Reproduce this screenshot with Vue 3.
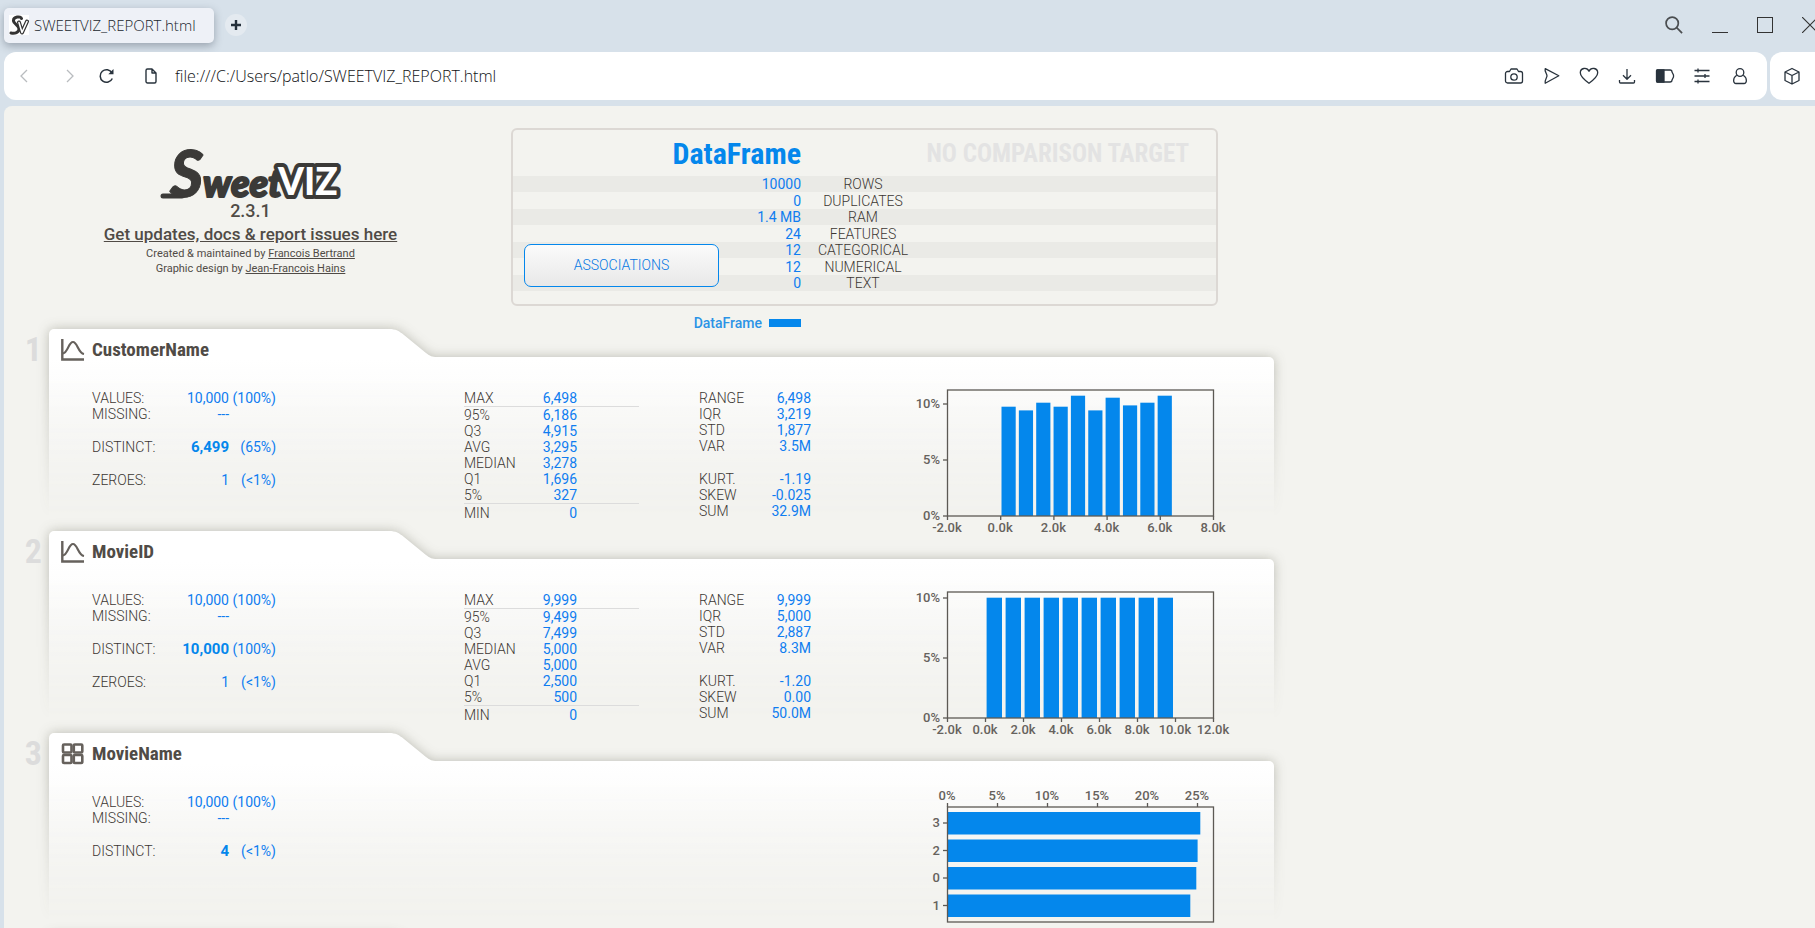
<script setup>
import { ref } from 'vue'

const address = ref('file:///C:/Users/patlo/SWEETVIZ_REPORT.html')

const summary = [
  ['10000', 'ROWS'],
  ['0', 'DUPLICATES'],
  ['1.4 MB', 'RAM'],
  ['24', 'FEATURES'],
  ['12', 'CATEGORICAL'],
  ['12', 'NUMERICAL'],
  ['0', 'TEXT'],
]

const FRAME_X = 47
const FRAME_W = 266

function histogram({ ticks, first, pitch, width, bars, step }) {
  const top = 61
  const height = 126
  const bottom = top + height
  const gap = FRAME_W / (ticks.length - 1)
  return {
    top,
    height,
    bars: bars.map((h, i) => ({ x: first + i * pitch, y: bottom - h, w: width, h })),
    xTicks: ticks.map((label, i) => ({ label, x: FRAME_X + i * gap, y1: bottom, y2: bottom + 4, ty: bottom + 16 })),
    yTicks: ['0%', '5%', '10%'].map((label, i) => ({ label, y: bottom - i * step })),
  }
}

function ranking({ ticks, rows }) {
  const top = 74
  return {
    top,
    height: 115,
    bars: rows.map((r, i) => ({ x: FRAME_X, y: top + 5 + i * 27.5, w: r.size, h: 22.5 })),
    xTicks: ticks.map((label, i) => ({ label, x: FRAME_X + i * 50, y1: top - 4, y2: top, ty: top - 7 })),
    yTicks: rows.map((r, i) => ({ label: r.label, y: top + 16 + i * 27.5 })),
  }
}

const features = [
  {
    name: 'CustomerName',
    kind: 'numeric',
    counts: [
      [['VALUES:', '10,000', '(100%)'], ['MISSING:', '---', '']],
      [['DISTINCT:', '6,499', '(65%)']],
      [['ZEROES:', '1', '(<1%)']],
    ],
    spread: [
      [['MAX', '6,498']],
      [['95%', '6,186'], ['Q3', '4,915'], ['AVG', '3,295'], ['MEDIAN', '3,278'], ['Q1', '1,696'], ['5%', '327']],
      [['MIN', '0']],
    ],
    moments: [
      [['RANGE', '6,498'], ['IQR', '3,219'], ['STD', '1,877'], ['VAR', '3.5M']],
      [['KURT.', '-1.19'], ['SKEW', '-0.025'], ['SUM', '32.9M']],
    ],
    chart: histogram({
      ticks: ['-2.0k', '0.0k', '2.0k', '4.0k', '6.0k', '8.0k'],
      first: 101.5, pitch: 17.35, width: 14.2, step: 56,
      bars: [109.3, 105.6, 113.3, 109.3, 120.3, 105.6, 118.3, 110.6, 113.3, 120.3],
    }),
  },
  {
    name: 'MovieID',
    kind: 'numeric',
    counts: [
      [['VALUES:', '10,000', '(100%)'], ['MISSING:', '---', '']],
      [['DISTINCT:', '10,000', '(100%)']],
      [['ZEROES:', '1', '(<1%)']],
    ],
    spread: [
      [['MAX', '9,999']],
      [['95%', '9,499'], ['Q3', '7,499'], ['MEDIAN', '5,000'], ['AVG', '5,000'], ['Q1', '2,500'], ['5%', '500']],
      [['MIN', '0']],
    ],
    moments: [
      [['RANGE', '9,999'], ['IQR', '5,000'], ['STD', '2,887'], ['VAR', '8.3M']],
      [['KURT.', '-1.20'], ['SKEW', '0.00'], ['SUM', '50.0M']],
    ],
    chart: histogram({
      ticks: ['-2.0k', '0.0k', '2.0k', '4.0k', '6.0k', '8.0k', '10.0k', '12.0k'],
      first: 86.6, pitch: 19, width: 15.4, step: 60,
      bars: Array(10).fill(120.3),
    }),
  },
  {
    name: 'MovieName',
    kind: 'category',
    counts: [
      [['VALUES:', '10,000', '(100%)'], ['MISSING:', '---', '']],
      [['DISTINCT:', '4', '(<1%)']],
    ],
    chart: ranking({
      ticks: ['0%', '5%', '10%', '15%', '20%', '25%'],
      rows: [
        { label: '3', size: 253.3 },
        { label: '2', size: 250.6 },
        { label: '0', size: 249.3 },
        { label: '1', size: 243.3 },
      ],
    }),
  },
  { name: '', kind: 'empty', counts: [] },
]
</script>

<template>
  <div class="window">
    <header class="tabbar">
      <div class="tab">
        <svg class="favicon" width="20" height="20" viewBox="0 0 20 20" aria-hidden="true">
          <rect width="20" height="20" fill="#fff" />
          <g fill="none" stroke-linecap="round" stroke-linejoin="round">
            <path d="M12.500 3.500C12 .8 4 1.500 4.500 6c.3 3 5.500 4 5.500 8 0 3.500-4 4.800-8 4" stroke="#333" stroke-width="3" />
            <path d="M10 7.500l3 10 5-11" stroke="#333" stroke-width="4" />
            <path d="M10 7.500l3 10 5-11" stroke="#fff" stroke-width="1.600" />
          </g>
        </svg>
        <span>SWEETVIZ_REPORT.html</span>
      </div>
      <button class="newtab" aria-label="New tab">
        <svg width="10" height="10" viewBox="0 0 10 10"><path d="M5 0v10M0 5h10" stroke="#25303b" stroke-width="2.400" /></svg>
      </button>
      <div class="wincontrols">
        <button aria-label="Search tabs">
          <svg width="18" height="18" viewBox="0 0 20 20" fill="none" stroke="#4a4d50" stroke-width="1.900"><circle cx="8" cy="8" r="6.800" /><path d="M13 13L19 19" /></svg>
        </button>
        <button aria-label="Minimize">
          <svg width="16" height="16" viewBox="0 0 16 16"><path d="M0 15.500h16" stroke="#333" /></svg>
        </button>
        <button aria-label="Maximize">
          <svg width="16" height="16" viewBox="0 0 16 16"><rect x=".5" y=".5" width="15" height="15" fill="none" stroke="#333" /></svg>
        </button>
        <button aria-label="Close">
          <svg width="16" height="16" viewBox="0 0 16 16"><path d="M0 0l16 16M16 0L0 16" stroke="#333" stroke-width="1.200" /></svg>
        </button>
      </div>
    </header>

    <nav class="toolbar">
      <div class="addressbar">
        <button class="back" aria-label="Back">
          <svg width="8" height="14" viewBox="0 0 8 14" fill="none" stroke="#b9bcbf" stroke-width="1.300"><path d="M7 1L1 7l6 6" /></svg>
        </button>
        <button class="forward" aria-label="Forward">
          <svg width="8" height="14" viewBox="0 0 8 14" fill="none" stroke="#b9bcbf" stroke-width="1.300"><path d="M1 1l6 6-6 6" /></svg>
        </button>
        <button class="reload" aria-label="Reload">
          <svg width="16" height="16" viewBox="0 0 16 16" fill="none" stroke="#29333d" stroke-width="1.500"><path d="M13.300 10.500a6.300 6.300 0 1 1-.3-5.600" /><path d="M14.500 1v5.200H9.300z" fill="#29333d" stroke="none" /></svg>
        </button>
        <svg class="doc" width="12" height="16" viewBox="0 0 12 16" fill="none" stroke="#29333d" stroke-width="1.400" stroke-linejoin="round" aria-hidden="true"><path d="M2.500 1H7l4 4v8.500a1.500 1.500 0 0 1-1.500 1.500h-7A1.500 1.500 0 0 1 1 13.500v-11A1.500 1.500 0 0 1 2.500 1zM7 1v4h4" /></svg>
        <input v-model="address" class="address" aria-label="Address" type="text" />
        <div class="actions">
          <button aria-label="Snapshot">
            <svg width="20" height="20" viewBox="0 0 20 20"><path d="M3.500 5.500h2L7 3h6l1.500 2.500h2a2 2 0 0 1 2 2V15a2 2 0 0 1-2 2h-13a2 2 0 0 1-2-2V7.500a2 2 0 0 1 2-2z" /><circle cx="10" cy="11" r="3.200" /></svg>
          </button>
          <button aria-label="Flow">
            <svg width="20" height="20" viewBox="0 0 20 20"><path d="M3.200 2.600l13.600 7.200L3.200 17.200C2.300 14.500 4.800 12 5 10S2.300 5.500 3.200 2.600z" /></svg>
          </button>
          <button aria-label="Bookmark">
            <svg width="20" height="20" viewBox="0 0 20 20"><path d="M10 17.300C5.500 14 1.300 10.600 1.300 6.800c0-5 6.700-6 8.700-1.500 2-4.500 8.700-3.500 8.700 1.500 0 3.800-4.200 7.200-8.700 10.500z" /></svg>
          </button>
          <button aria-label="Downloads">
            <svg width="20" height="20" viewBox="0 0 20 20"><path d="M10 3v10M6 9.300l4 4 4-4M2.500 14v2a1 1 0 0 0 1 1h13a1 1 0 0 0 1-1v-2" /></svg>
          </button>
          <button aria-label="Battery saver">
            <svg width="20" height="20" viewBox="0 0 20 20"><path d="M2.500 4h12.500a2 2 0 0 1 2 2l1.500 3v2L17 14a2 2 0 0 1-2 2H2.500a1 1 0 0 1-1-1V5a1 1 0 0 1 1-1z" /><path d="M2 4h7v12H2z" fill="#29333d" /></svg>
          </button>
          <button aria-label="Easy setup">
            <svg width="20" height="20" viewBox="0 0 20 20"><path d="M2.500 4.500h15M2.500 10h15M2.500 15.500h15M6 2.500v4M13 8v4M6 13.500v4" /></svg>
          </button>
          <button aria-label="Profile">
            <svg width="20" height="20" viewBox="0 0 20 20"><circle cx="10" cy="6.500" r="3.800" /><path d="M6.700 9.300C2.500 12 3 17.500 6 17.500h8c3 0 3.500-5.500-.7-8.200" /></svg>
          </button>
        </div>
      </div>
      <div class="sidebox">
        <button aria-label="Extensions">
          <svg width="20" height="20" viewBox="0 0 20 20"><path d="M10 2.500l7 3.500v8.500L10 18l-7-3.500V6zM3 6l7 3.500L17 6M10 9.500V18" /></svg>
        </button>
      </div>
    </nav>

    <main class="page">
      <div class="report">
        <section class="top">
          <div class="brand">
            <svg class="logo" width="182" height="50" viewBox="0 0 182 50" role="img" aria-label="Sweetviz">
              <g class="script">
                <path d="M3 46H22" fill="none" stroke-width="5" stroke-linecap="round" />
                <text x="10" y="47" font-size="64" stroke-width="1">S</text>
                <text x="43" y="47" font-size="38" stroke-width="2">weet</text>
              </g>
              <text class="block" x="118" y="45" font-size="37">VIZ</text>
            </svg>
            <p class="version">2.3.1</p>
            <a class="updates" href="#">Get updates, docs &amp; report issues here</a>
            <p class="credit">Created &amp; maintained by <a href="#">Francois Bertrand</a></p>
            <p class="credit">Graphic design by <a href="#">Jean-Francois Hains</a></p>
          </div>

          <div class="overview">
            <div class="panel">
              <div class="titles">
                <h1>DataFrame</h1>
                <h2>NO COMPARISON TARGET</h2>
              </div>
              <table class="summary">
                <tbody>
                  <tr v-for="[value, label] in summary" :key="label">
                    <td>{{ value }}</td>
                    <th scope="row">{{ label }}</th>
                    <td></td>
                  </tr>
                </tbody>
              </table>
              <button class="associations">ASSOCIATIONS</button>
            </div>
            <div class="legend"><span>DataFrame</span><i></i></div>
          </div>
        </section>

        <article v-for="(f, n) in features" :key="n" class="feature">
          <div class="backdrop">
            <svg width="100%" height="100%" aria-hidden="true">
              <defs>
                <linearGradient :id="'fade' + n" gradientUnits="userSpaceOnUse" x1="0" y1="0" x2="0" y2="202">
                  <stop offset=".15" stop-color="#fff" />
                  <stop offset="1" stop-color="#f1f1ef" />
                </linearGradient>
              </defs>
              <rect y="28" width="100%" height="174" rx="5" :fill="`url(#fade${n})`" />
              <path d="M0 60V5a5 5 0 0 1 5-5H340c7 0 10 2 15 6l22 18c4 3 6 4 11 4V60z" :fill="`url(#fade${n})`" />
            </svg>
          </div>
          <template v-if="f.name">
            <span class="index">{{ n + 1 }}</span>
            <h3>
              <svg v-if="f.kind === 'numeric'" width="24" height="24" viewBox="0 0 24 24" fill="none" stroke="#66615c" aria-hidden="true">
                <path d="M1.300 1v20.500H23" stroke-width="2.400" />
                <path d="M2 15.500C7 14.500 7.500 4 12 4s5 11 11 12" stroke-width="2.200" />
              </svg>
              <svg v-else width="24" height="24" viewBox="0 0 24 24" fill="none" stroke="#66615c" stroke-width="2.600" aria-hidden="true">
                <rect x="2" y="2.500" width="8.500" height="8" rx="1" /><rect x="12.800" y="2.500" width="8.500" height="8" rx="1" />
                <rect x="2" y="13" width="8.500" height="8" rx="1" /><rect x="12.800" y="13" width="8.500" height="8" rx="1" />
              </svg>
              {{ f.name }}
            </h3>
            <div class="stats">
              <table class="counts">
                <tbody v-for="(group, g) in f.counts" :key="g">
                  <tr v-for="[label, value, share] in group" :key="label" :class="{ distinct: label === 'DISTINCT:' }">
                    <th scope="row">{{ label }}</th>
                    <td>{{ value }}</td>
                    <td class="share">{{ share }}</td>
                  </tr>
                </tbody>
              </table>
              <table v-if="f.spread" class="spread">
                <tbody v-for="(group, g) in f.spread" :key="g">
                  <tr v-for="[label, value] in group" :key="label">
                    <th scope="row">{{ label }}</th>
                    <td>{{ value }}</td>
                    <td></td>
                  </tr>
                </tbody>
              </table>
              <table v-if="f.moments" class="moments">
                <tbody v-for="(group, g) in f.moments" :key="g">
                  <tr v-for="[label, value] in group" :key="label">
                    <th scope="row">{{ label }}</th>
                    <td>{{ value }}</td>
                  </tr>
                </tbody>
              </table>
            </div>
            <svg class="chart" width="340" height="202" role="img" :aria-label="f.name + ' distribution'">
              <rect v-for="(b, i) in f.chart.bars" :key="'b' + i" :x="b.x" :y="b.y" :width="b.w" :height="b.h" fill="#0487ec" />
              <g fill="none" stroke="#5c5954" stroke-width="1.300">
                <rect :x="FRAME_X + 0.500" :y="f.chart.top" :width="FRAME_W" :height="f.chart.height" />
                <path v-for="t in f.chart.xTicks" :key="t.label" :d="`M${t.x + 0.500} ${t.y1}V${t.y2}`" />
                <path v-for="t in f.chart.yTicks" :key="t.label" :d="`M${FRAME_X - 4} ${t.y}h4`" />
              </g>
              <g text-anchor="middle"><text v-for="t in f.chart.xTicks" :key="t.label" :x="t.x" :y="t.ty">{{ t.label }}</text></g>
              <g text-anchor="end"><text v-for="t in f.chart.yTicks" :key="t.label" :x="FRAME_X - 7" :y="t.y + 4">{{ t.label }}</text></g>
            </svg>
          </template>
        </article>
      </div>
    </main>
  </div>
</template>

<style>
html,
body {
  overflow: hidden;
  background: #d7e1ea;
}
</style>

<style scoped>
* {
  box-sizing: border-box;
}
.window {
  display: flex;
  flex-direction: column;
  height: 100vh;
  overflow: hidden;
  background: #d7e1ea;
  font-family: Roboto, "Liberation Sans", sans-serif;
}
button {
  display: flex;
  align-items: center;
  justify-content: center;
  padding: 0;
  border: 0;
  background: none;
  font-family: inherit;
}
p,
h1,
h2,
h3 {
  margin: 0;
}
table {
  border-spacing: 0;
  table-layout: fixed;
}
th,
td {
  padding: 0;
}

.tabbar {
  display: flex;
  align-items: center;
  flex: none;
  height: 52px;
  padding: 0 0 2px 4px;
}
.tab {
  display: flex;
  align-items: center;
  gap: 5px;
  width: 210px;
  height: 35px;
  padding-left: 5px;
  border-radius: 5px;
  background: #eef1f7;
  box-shadow: 0 3px 8px rgba(60, 70, 85, 0.4);
  color: #20272e;
  font: 300 15px/20px "Open Sans", "Noto Sans", sans-serif;
}
.newtab {
  width: 22px;
  height: 22px;
  margin-left: 11px;
  border-radius: 11px;
  background: #e4eaf0;
}
.wincontrols {
  display: flex;
  gap: 29px;
  margin-left: auto;
  margin-right: -3px;
}

.toolbar {
  display: flex;
  flex: none;
  gap: 3px;
  height: 48px;
  padding-left: 4px;
}
.addressbar {
  display: flex;
  flex: 1;
  align-items: center;
  padding: 0 17px 0 16px;
  border-radius: 12px;
  background: #fff;
}
.sidebox {
  display: flex;
  align-items: center;
  width: 45px;
  padding-left: 12px;
  border-radius: 12px 0 0 12px;
  background: #fff;
}
.forward {
  margin-left: 38px;
}
.reload {
  margin-left: 25px;
}
.doc {
  margin: 0 18px 0 30px;
}
.address {
  flex: 1;
  min-width: 0;
  padding: 0;
  border: 0;
  outline: 0;
  background: none;
  color: #101214;
  font: 300 16px/24px "Open Sans", "Noto Sans", sans-serif;
}
.actions {
  display: flex;
  justify-content: space-between;
  width: 246px;
}
.actions svg,
.sidebox svg {
  fill: none;
  stroke: #29333d;
  stroke-width: 1.300;
  stroke-linejoin: round;
}

.page {
  flex: 1;
  min-height: 0;
  margin: 6px 0 0 4px;
  overflow: hidden;
  border-radius: 8px 0 0 0;
  background: #f3f3ef;
  color: #504b46;
}
.report {
  max-width: 1270px;
}
.top {
  display: grid;
  grid-template-columns: 493px minmax(0, 707px);
  column-gap: 14px;
  padding-top: 22px;
}
.brand {
  display: flex;
  flex-direction: column;
  align-items: center;
  padding-top: 22px;
  font-weight: 500;
}
.logo {
  overflow: visible;
}
.script {
  fill: #3b3a38;
  stroke: #3b3a38;
  stroke-linejoin: round;
  font-family: Lato, sans-serif;
  font-style: italic;
  font-weight: 900;
}
.block {
  fill: #fff;
  stroke: #3b3a38;
  stroke-width: 8px;
  stroke-linejoin: round;
  paint-order: stroke;
  font-family: Lato, sans-serif;
  font-weight: 900;
}
.version {
  font-size: 18px;
  line-height: 22px;
}
.updates {
  color: inherit;
  font-size: 17px;
  line-height: 24px;
}
.credit {
  font-size: 11px;
  font-weight: 400;
  line-height: 15px;
}
.credit a {
  color: inherit;
}

.panel {
  position: relative;
  height: 178px;
  border: 2px solid #dcd8d4;
  border-radius: 6px;
}
.titles {
  display: grid;
  grid-template-columns: 288px 1fr;
  align-items: center;
  height: 46px;
  font-family: "Roboto Condensed", Roboto, sans-serif;
}
.titles h1 {
  color: #0487ec;
  font-size: 30px;
  line-height: 48px;
  text-align: right;
}
.titles h2 {
  padding-right: 27px;
  color: #e3e3e3;
  font-size: 25px;
  line-height: 48px;
  text-align: right;
  white-space: nowrap;
}
.titles > * {
  height: 46px;
}
.summary {
  width: 100%;
  font-size: 14px;
}
.summary td,
.summary th {
  height: 16px;
  line-height: 16px;
}
.summary tr:nth-child(even) > * {
  height: 17px;
}
.summary tr:nth-child(odd) {
  background: #eaeae6;
}
.summary td:first-child {
  width: 288px;
  color: #0f7df0;
  text-align: right;
}
.summary th {
  width: 124px;
  color: #3c3733;
  font-weight: 300;
}
.associations {
  position: absolute;
  left: 11px;
  bottom: 17px;
  width: 195px;
  height: 43px;
  padding-bottom: 2px;
  border: 1px solid #0487ec;
  border-radius: 7px;
  background: linear-gradient(#fbfbfb, #e8e8e8);
  color: #0478e4;
  font-size: 14px;
  font-weight: 300;
}
.legend {
  display: flex;
  align-items: center;
  justify-content: flex-end;
  gap: 7px;
  width: 290px;
  height: 23px;
  padding-top: 10px;
  color: #2b93e6;
  font-size: 14px;
  font-weight: 500;
}
.legend i {
  width: 32px;
  height: 8px;
  background: #0487ec;
}

.feature {
  position: relative;
  min-height: 202px;
  margin-left: 45px;
}
.backdrop {
  position: absolute;
  inset: -24px -24px 0;
  padding: 24px 24px 0;
  overflow: hidden;
  -webkit-mask-image: linear-gradient(#000 30%, transparent 94%);
  mask-image: linear-gradient(#000 30%, transparent 94%);
}
.backdrop svg {
  display: block;
  overflow: visible;
  filter: drop-shadow(0 0 6px rgba(60, 60, 40, 0.3));
}
.index {
  position: absolute;
  right: calc(100% + 7px);
  top: 0;
  color: #dcdcdc;
  font: 700 34px/40px "Roboto Condensed", Roboto, sans-serif;
}
h3 {
  position: relative;
  display: flex;
  align-items: center;
  gap: 7px;
  height: 42px;
  padding-left: 12px;
  font: 700 19px/42px "Roboto Condensed", Roboto, sans-serif;
}
.stats {
  position: relative;
  display: grid;
  grid-template-columns: 372fr 235fr 575fr;
  align-items: start;
  padding: 19px 0 0 43px;
  font-size: 14px;
}
.stats th {
  height: 16px;
  color: #3c3733;
  font-weight: 300;
  line-height: 16px;
  text-align: left;
}
.stats td {
  height: 16px;
  color: #0f7df0;
  line-height: 16px;
  text-align: right;
}
.counts {
  width: 184px;
}
.counts th {
  width: 70px;
}
.counts .share {
  width: 47px;
}
.counts tbody + tbody tr:first-child > *,
.moments tbody + tbody tr:first-child > * {
  height: 33px;
  padding-top: 17px;
}
.distinct td:nth-child(2) {
  color: #0487ec;
  font-size: 15px;
  font-weight: 700;
}
.spread {
  width: 175px;
}
.spread th,
.moments th {
  width: 60px;
}
.spread td:last-child {
  width: 62px;
}
.spread tbody + tbody tr:first-child > * {
  border-top: 1px solid #dcdcdc;
}
.spread tbody:last-child tr > * {
  padding-top: 1px;
}
.moments {
  width: 112px;
}
.chart {
  position: absolute;
  top: 0;
  right: 34px;
  overflow: visible;
}
.chart text {
  fill: #66625d;
  font-size: 13px;
  font-weight: 500;
}
</style>
